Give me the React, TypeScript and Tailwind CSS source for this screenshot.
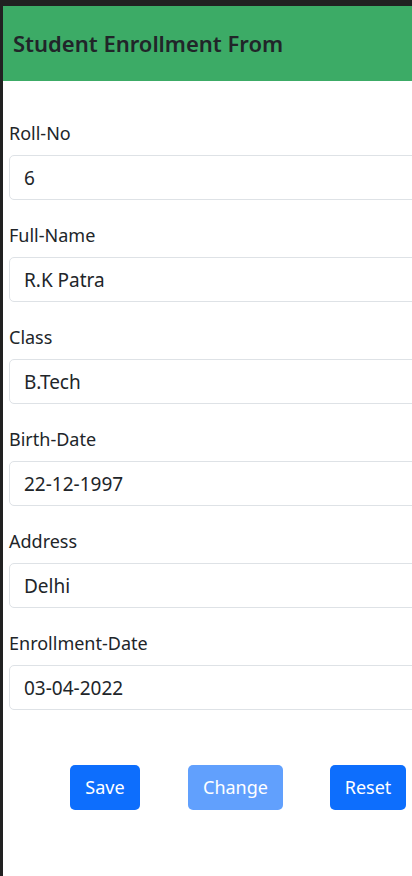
export default function App() {
  const fields = [
    { label: 'Roll-No', value: '6' },
    { label: 'Full-Name', value: 'R.K Patra' },
    { label: 'Class', value: 'B.Tech' },
    { label: 'Birth-Date', value: '22-12-1997' },
    { label: 'Address', value: 'Delhi' },
    { label: 'Enrollment-Date', value: '03-04-2022' },
  ];

  return (
    <div className="min-h-[876px] bg-[#212121] pl-[3px] pt-[6px] font-['Segoe_UI','Noto_Sans',sans-serif]">
      <div className="h-[870px] overflow-hidden bg-white">
        {/* Header */}
        <div className="flex h-[75px] items-center bg-[#3cab66] px-[10px]">
          <h3 className="text-[22px] font-semibold text-[#212529]">Student Enrollment From</h3>
        </div>

        {/* Form */}
        <div className="flex flex-col gap-[23px] px-[6px] pt-[40px]">
          {fields.map((f) => (
            <div key={f.label} className="flex flex-col">
              <label className="mb-[9px] h-[25px] text-[18px] leading-[25px] text-[#212529]">{f.label}</label>
              <input
                readOnly
                value={f.value}
                className="h-[45px] w-[440px] rounded-[5px] border border-[#dee2e6] px-[14px] text-[19px] text-[#212529] outline-none"
              />
            </div>
          ))}
        </div>

        {/* Buttons */}
        <div className="mt-[55px] flex pl-[67px]">
          <button className="h-[45px] w-[70px] rounded-[5px] bg-[#0d6efd] text-[18px] text-white">Save</button>
          <button className="ml-[48px] h-[45px] w-[95px] rounded-[5px] bg-[#0d6efd] text-[18px] text-white opacity-65">
            Change
          </button>
          <button className="ml-[47px] h-[45px] w-[76px] rounded-[5px] bg-[#0d6efd] text-[18px] text-white">Reset</button>
        </div>
      </div>
    </div>
  );
}
